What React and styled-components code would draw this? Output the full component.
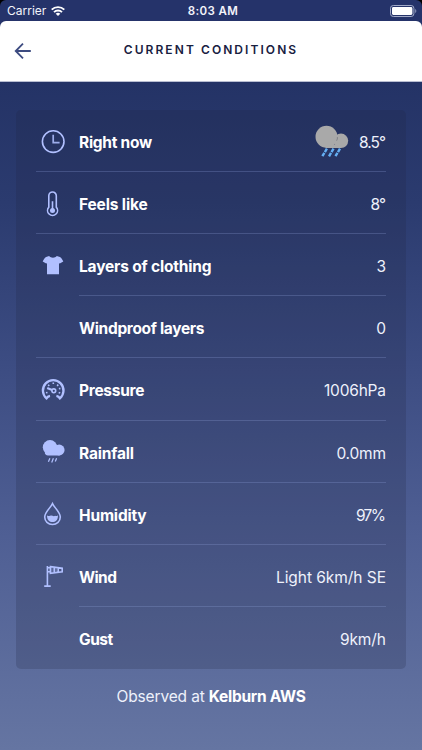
import React from "react";
import styled, { createGlobalStyle } from "styled-components";

const GlobalStyle = createGlobalStyle`
  * { box-sizing: border-box; }
  html, body { margin: 0; background: #000; }
  body { font-family: Inter, "Noto Sans", sans-serif; -webkit-font-smoothing: antialiased; }
`;

const Screen = styled.div`
  width: 422px;
  height: 750px;
  display: flex;
  flex-direction: column;
  overflow: hidden;
  border-radius: 6px 6px 0 0;
  background: #25336a;
`;

const StatusBar = styled.div`
  flex: none;
  height: 21px;
  display: grid;
  grid-template-columns: 1fr auto 1fr;
  align-items: center;
  padding: 1px 5px 0 7px;
  color: #f3f4fa;
  font-size: 12px;
  line-height: 20px;
`;

const Carrier = styled.div`
  display: flex;
  align-items: center;
  gap: 5px;
  letter-spacing: 0;
`;

const Clock = styled.div`
  font-weight: 600;
  font-size: 11.5px;
  letter-spacing: 0.4px;
  margin: 0 -1px 0 1px;
`;

const BatterySlot = styled.div`
  display: flex;
  justify-content: flex-end;
`;

const Header = styled.header`
  flex: none;
  height: 61px;
  display: grid;
  grid-template-columns: 40px 1fr 40px;
  align-items: center;
  background: #fff;
  border-radius: 6px 6px 0 0;
  border-bottom: 1px solid #b9bed2;
`;

const BackButton = styled.button`
  border: 0;
  padding: 0 0 0 14px;
  background: none;
  display: flex;
`;

const Title = styled.h1`
  margin: 0;
  padding-bottom: 3px;
  text-align: center;
  color: #18203f;
  font-size: 12px;
  font-weight: 600;
  line-height: 16px;
  letter-spacing: 2.07px;
`;

const Content = styled.main`
  flex: 1;
  padding: 28px 16px 0;
  background: linear-gradient(180deg, #243366 0%, #2b3b6f 18%, #3c4c82 42%, #4f5f94 68%, #6575a2 100%);
`;

const Card = styled.section`
  height: 559px;
  display: grid;
  grid-template-rows: repeat(9, 1fr);
  padding: 0 20px;
  border-radius: 5px;
  background: rgba(33, 37, 67, 0.21);
`;

const Row = styled.div`
  display: grid;
  grid-template-columns: 43px 1fr;
`;

const IconSlot = styled.div`
  display: flex;
  align-items: center;
  border-bottom: 1px solid ${(p) => (p.$line ? "rgba(145, 163, 219, 0.27)" : "transparent")};
  padding: 2px 0 0 5px;
`;

const RowBody = styled.div`
  display: flex;
  align-items: center;
  justify-content: space-between;
  border-bottom: 1px solid ${(p) => (p.$line ? "rgba(145, 163, 219, 0.27)" : "transparent")};
  padding-top: 5px;
  line-height: 24px;
`;

const Label = styled.span`
  color: #fff;
  font-size: 15.5px;
  font-weight: 650;
  letter-spacing: ${(p) => p.$track}px;
`;

const Value = styled.span`
  display: flex;
  align-items: center;
  gap: 10px;
  color: #eef1fb;
  font-size: 15.5px;
  letter-spacing: ${(p) => p.$track}px;
  padding-right: ${(p) => Math.max(0, -p.$track)}px;
`;

const Footer = styled.p`
  margin: 16px 0 0;
  text-align: center;
  color: #eef1fb;
  font-size: 15.5px;
  line-height: 24px;
  letter-spacing: -0.14px;

  strong { color: #fff; font-weight: 650; letter-spacing: -0.28px; }
`;

const Glyph = styled.svg`
  display: block;
  flex: none;
  overflow: visible;
`;

const tint = "#b1c0ff";

const WifiIcon = () => (
  <Glyph width="14" height="10" viewBox="0 0 14 10" fill="none" stroke="#fff" strokeWidth="1.9">
    <path d="M.7 3.7C4.2.2 9.8.2 13.3 3.7" />
    <path d="M3 6.1c2.2-2.2 5.8-2.2 8 0" />
    <path d="M7 10 4.7 7.7c1.3-1.2 3.3-1.2 4.6 0Z" fill="#fff" stroke="none" />
  </Glyph>
);

const BatteryIcon = () => (
  <Glyph width="27" height="12" viewBox="0 0 27 12">
    <rect x=".5" y=".5" width="23.4" height="11" rx="2.8" fill="none" stroke="#a2aac8" />
    <rect x="2" y="2" width="20.4" height="8" rx="1.4" fill="#fff" />
    <path d="M25.2 4v4c1.5-.6 1.5-3.4 0-4Z" fill="#8d97bb" />
  </Glyph>
);

const BackIcon = () => (
  <Glyph width="18" height="16" viewBox="0 0 18 16" fill="none" stroke="#3d4b80" strokeWidth="1.8">
    <path d="M9 .7 1.7 8 9 15.3M1.8 8h15" />
  </Glyph>
);

const ClockIcon = () => (
  <Glyph width="24" height="24" viewBox="0 0 24 24" fill="none" stroke={tint} strokeWidth="1.6">
    <circle cx="12.2" cy="11.6" r="10.8" />
    <path d="M12.2 4.8v7.9h6.4" stroke="#9dadeb" strokeWidth="1.7" />
  </Glyph>
);

const ThermometerIcon = () => (
  <Glyph width="24" height="26" viewBox="0 0 24 26" fill="none" stroke={tint} strokeWidth="1.6">
    <path d="M7.8 16.1V4.8a3.75 3.75 0 0 1 7.5 0v11.3a5 5 0 1 1-7.5 0Z" />
    <path d="M11.5 10.2V19" />
    <circle cx="11.5" cy="19.6" r="2.5" fill={tint} stroke="none" />
  </Glyph>
);

const ShirtIcon = () => (
  <Glyph width="24" height="24" viewBox="0 0 24 24" fill={tint}>
    <path d="M8.1 2.1c1.8 2.3 5.9 2.3 7.7 0l3.1.8c1.6.8 2.6 2.8 3.4 4.5l-3.5 2.2-.8-.4v11.1H6V9.2l-.8.4-3.5-2.2c.8-1.7 1.8-3.7 3.4-4.5Z" />
  </Glyph>
);

const GaugeIcon = () => (
  <Glyph width="24" height="24" viewBox="0 0 24 24" fill="none" stroke={tint}>
    <path d="M9 17.9C7 18.3 6.2 19.1 5.5 20.3A10.3 10.3 0 1 1 18.9 20.3c-.7-1.2-1.5-2-3.5-2.4" strokeWidth="2.3" />
    <path d="m6.2 10 4.9 2.1" strokeWidth="2.2" />
    <circle cx="12.8" cy="12.8" r="1.9" strokeWidth="1.6" />
    <path d="M11.5 5.3h1.6M7.1 6.8l1.2 1.1M16.1 7.8l1.2-1.1M17.9 10.7l1.5-.3M17.7 14.4l1.5.6M5 14.8l1.5-.4" strokeWidth="1.6" />
  </Glyph>
);

const RainIcon = () => (
  <Glyph width="24" height="24" viewBox="0 0 24 24" fill={tint}>
    <circle cx="9" cy="7.3" r="7.2" />
    <circle cx="18.2" cy="10" r="5.4" />
    <path d="M4.6 12.3h14v3.1H6.8c-1.2 0-2.2-.9-3-2Z" />
    <path d="m8.9 18.2-1.5 3.6M12.4 18.2l-1.7 4.2M15.6 18.2l-1.3 3.2" stroke={tint} strokeWidth="1.25" />
  </Glyph>
);

const DropIcon = () => (
  <Glyph width="24" height="24" viewBox="0 0 24 24" fill="none" stroke={tint}>
    <path d="M11.5 1.6C9.5 5.7 3.7 10.5 3.7 15a7.8 7.5 0 0 0 15.6 0c0-4.5-5.8-9.3-7.8-13.4Z" strokeWidth="1.6" />
    <path d="M6.1 13.2q1.4 1.3 2.7.6 1.3-.8 2.7 0 1.4.8 2.7 0 1.3.7 2.7-.6c.8 9.2-11.6 9.2-10.8 0Z" fill={tint} stroke="none" />
  </Glyph>
);

const WindsockIcon = () => (
  <Glyph width="24" height="24" viewBox="0 0 24 24" fill="none" stroke={tint} strokeWidth="1.6">
    <path d="M6.4 2v20M3.2 22.1h6.5M6.4 3.8H9M6.4 7.8H9" />
    <path d="m9.4 2.6 11.8 1.7v3.5L9.4 9.3ZM13.2 3.1v5.6M17.2 3.7v4.6" />
    <path d="m9.5 3 2.2.3v5.3l-2.2.3ZM14 3.7l2 .3v4l-2 .3Z" fill={tint} fillOpacity=".25" stroke="none" />
  </Glyph>
);

const ShowersIcon = () => (
  <Glyph width="34" height="32" viewBox="0 1 34 32">
    <circle cx="26" cy="14.8" r="7.2" fill="#a9a9a9" />
    <path d="M8 18.5h18V22H11Z" fill="#a9a9a9" />
    <circle cx="11.5" cy="10.8" r="11" fill="#a9a9a9" />
    <path d="M22.4 11.1c.2 1.3-.1 2.6-.8 3.6" fill="none" stroke="#77797f" strokeWidth=".8" />
    <path d="m11.9 22.7-4.7 7.8M18.5 22.7l-4.6 7.8M25 22.7l-4.7 7.8" stroke="#64aff4" strokeWidth="2.4" strokeDasharray="3.9 1" />
  </Glyph>
);

const conditions = [
  { label: "Right now", value: "8.5°", icon: <ClockIcon />, extra: <ShowersIcon />, lt: -0.27, vt: -0.95 },
  { label: "Feels like", value: "8°", icon: <ThermometerIcon />, lt: -0.14, vt: -0.8 },
  { label: "Layers of clothing", value: "3", icon: <ShirtIcon />, lt: -0.18, vt: 0, indent: true },
  { label: "Windproof layers", value: "0", lt: -0.33, vt: 0 },
  { label: "Pressure", value: "1006hPa", icon: <GaugeIcon />, lt: -0.28, vt: -0.2 },
  { label: "Rainfall", value: "0.0mm", icon: <RainIcon />, lt: -0.18, vt: -0.2 },
  { label: "Humidity", value: "97%", icon: <DropIcon />, lt: -0.17, vt: -1.6 },
  { label: "Wind", value: "Light 6km/h SE", icon: <WindsockIcon />, lt: -0.6, vt: -0.05, indent: true },
  { label: "Gust", value: "9km/h", lt: -0.5, vt: -0.1, last: true },
];

export default function App() {
  return (
    <>
      <GlobalStyle />
      <Screen>
        <StatusBar>
          <Carrier>Carrier <WifiIcon /></Carrier>
          <Clock>8:03 AM</Clock>
          <BatterySlot><BatteryIcon /></BatterySlot>
        </StatusBar>
        <Header>
          <BackButton aria-label="Back"><BackIcon /></BackButton>
          <Title>CURRENT CONDITIONS</Title>
        </Header>
        <Content>
          <Card>
            {conditions.map((c) => (
              <Row key={c.label}>
                <IconSlot $line={!c.indent && !c.last}>{c.icon}</IconSlot>
                <RowBody $line={!c.last}>
                  <Label $track={c.lt}>{c.label}</Label>
                  <Value $track={c.vt}>{c.extra}<span>{c.value}</span></Value>
                </RowBody>
              </Row>
            ))}
          </Card>
          <Footer>Observed at <strong>Kelburn AWS</strong></Footer>
        </Content>
      </Screen>
    </>
  );
}
